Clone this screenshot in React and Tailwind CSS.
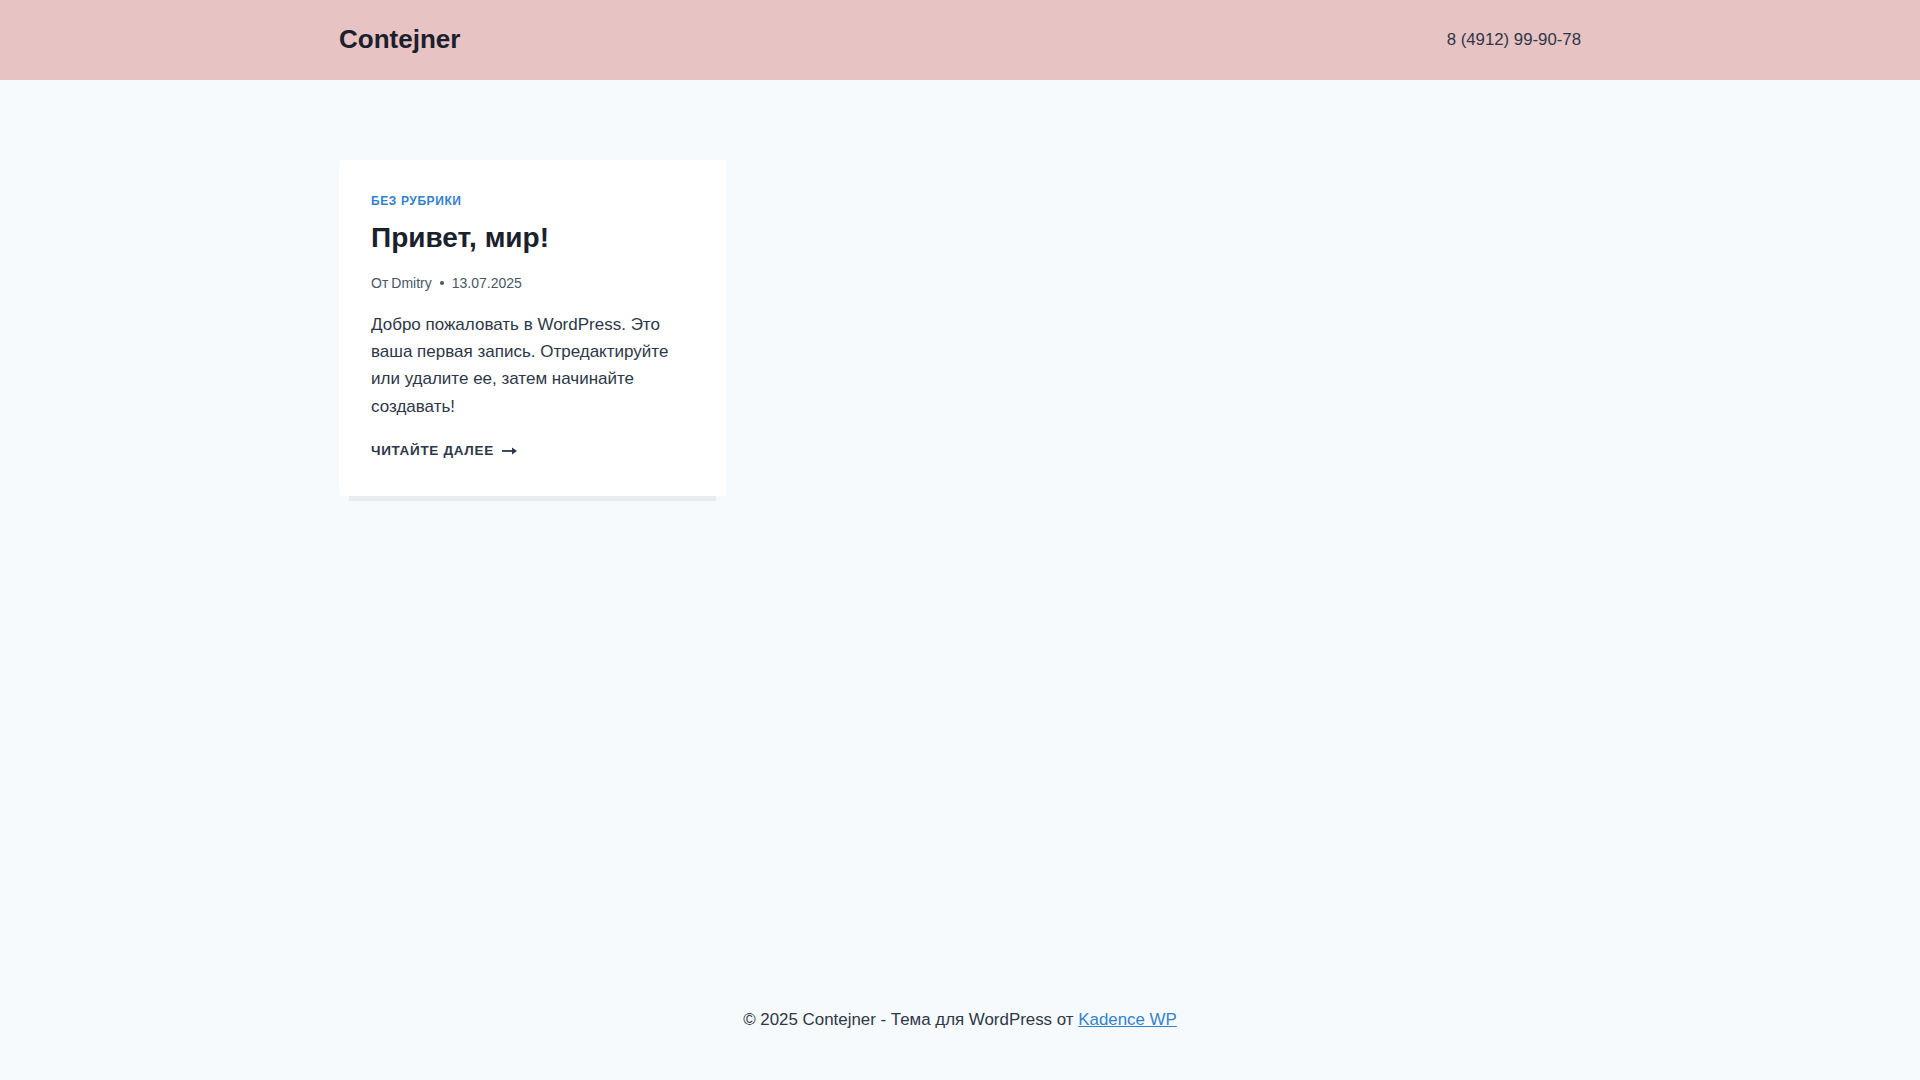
import React from "react";

function Arrow() {
  return (
    <svg width="15" height="8" viewBox="0 0 15 8" className="ml-[8px] shrink-0" aria-hidden="true">
      <path d="M0 4h11" stroke="#2D3748" strokeWidth="1.8" />
      <path d="M10 0.6L15 4L10 7.4Z" fill="#2D3748" />
    </svg>
  );
}

export default function App() {
  return (
    <div
      className="min-h-screen flex flex-col bg-[#f7fafc] text-[#2D3748]"
      style={{ fontFamily: '"Liberation Sans", Arial, sans-serif' }}
    >
      <header className="h-[80px] bg-[#e8c3c3] shrink-0">
        <div className="max-w-[1290px] mx-auto px-6 h-full flex items-center justify-between pb-[2px]">
          <div className="text-[26px] font-bold text-[#1A202C] leading-none">Contejner</div>
          <div className="text-[16.8px] text-[#2D3748] leading-none mt-[2px]">8 (4912) 99-90-78</div>
        </div>
      </header>

      <main className="flex-1 pt-[80px]">
        <div className="max-w-[1290px] mx-auto px-6">
          <div className="grid grid-cols-3 gap-10">
            <div>
              <article className="bg-white rounded-[3px] px-8 pt-8 pb-[35px]">
                <div className="text-[12px] leading-[18px] font-bold uppercase tracking-[0.05em] text-[#3182CE]">
                  Без рубрики
                </div>
                <h2 className="mt-[10px] text-[28px] leading-[36px] font-bold text-[#1A202C]">Привет, мир!</h2>
                <div className="mt-[17px] flex items-center text-[14px] leading-[20px] text-[#4A5568]">
                  <span>От</span>
                  <span className="ml-[3px]">Dmitry</span>
                  <span className="mx-[8px] w-[4px] h-[4px] rounded-full bg-[#4A5568]"></span>
                  <span>13.07.2025</span>
                </div>
                <p className="mt-[18px] text-[17px] leading-[27.2px] text-[#2D3748]">
                  Добро пожаловать в WordPress. Это ваша первая запись. Отредактируйте или удалите ее, затем начинайте создавать!
                </p>
                <div className="mt-[21px] flex items-center text-[13.5px] leading-[20px] font-bold uppercase tracking-[0.05em] text-[#2D3748]">
                  <span>Читайте далее</span>
                  <Arrow />
                </div>
              </article>
              <div className="mx-[10px] h-[5px] bg-[#e8ecf0]"></div>
            </div>
          </div>
        </div>
      </main>

      <footer className="pt-[30px] pb-[47px] shrink-0">
        <div className="text-center text-[16.9px] leading-[27.2px] text-[#2D3748]">
          © 2025 Contejner - Тема для WordPress от{" "}
          <a href="#" className="text-[#3182CE] underline">Kadence WP</a>
        </div>
      </footer>
    </div>
  );
}
